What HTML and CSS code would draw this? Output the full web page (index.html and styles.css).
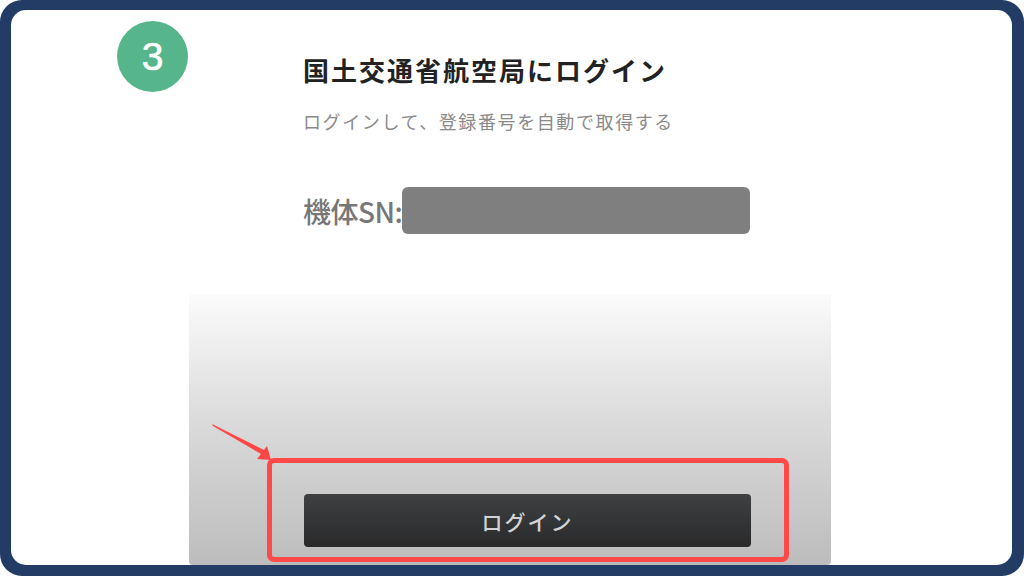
FILE: index.html
```html
<!DOCTYPE html>
<html lang="ja">
<head>
    <meta charset="utf-8">
    <title>国土交通省航空局にログイン</title>
    <link rel="stylesheet" href="styles.css">
</head>
<body>
    <div class="frame">
        <div class="card">
            <!-- Step number -->
            <div class="step-badge">3</div>

            <div class="screen">
                <div class="intro">
                    <h1 class="title">国土交通省航空局にログイン</h1>
                    <p class="subtitle">ログインして、登録番号を自動で取得する</p>
                    <div class="sn-row">
                        <span class="sn-label">機体SN:</span>
                        <span class="sn-value"></span>
                    </div>
                </div>

                <!-- Bottom area with highlighted login button -->
                <div class="panel">
                    <svg class="pointer" width="90" height="175" viewBox="0 0 90 175">
                        <polygon points="23,130 75,156 78,152 82,166 68,165 72,160 24,132" fill="#ff4646"/>
                    </svg>
                    <div class="highlight">
                        <button class="login-btn">ログイン</button>
                    </div>
                </div>
            </div>
        </div>
    </div>
</body>
</html>
```

FILE: styles.css
```css
/* General Styles */
body {
    margin: 0;
    background-color: #ffffff;
    font-family: "Noto Sans CJK JP", "Noto Sans", sans-serif;
}

.frame {
    width: 1024px;
    height: 576px;
    box-sizing: border-box;
    padding: 10px 12px 11px 11px;
    background-color: #223c66; /* navy frame */
    border-radius: 22px;
}

.card {
    position: relative;
    height: 100%;
    background-color: #ffffff;
    border-radius: 15px;
    overflow: hidden;
}

/* Step badge */
.step-badge {
    position: absolute;
    left: 106px;
    top: 11px;
    width: 71px;
    height: 71px;
    border-radius: 50%;
    background-color: #57b58b;
    color: #ffffff;
    font-family: "Liberation Sans", Arial, sans-serif;
    font-size: 39px;
    line-height: 71px;
    text-align: center;
    -webkit-text-stroke: 0.6px #ffffff;
}

/* Phone screen */
.screen {
    margin-left: 178px;
    width: 642px;
    height: 100%;
    display: flex;
    flex-direction: column;
}

.intro {
    padding: 44px 0 0 114px;
}

.title {
    margin: 0;
    font-size: 26px;
    line-height: 32px;
    letter-spacing: 2px;
    font-weight: bold;
    color: #222222;
}

.subtitle {
    margin: 23px 0 0;
    font-size: 18px;
    line-height: 24px;
    letter-spacing: 1.6px;
    color: #8a8a8a;
}

.sn-row {
    display: flex;
    align-items: center;
    margin-top: 54px;
    height: 47px;
}

.sn-label {
    font-size: 28px;
    font-weight: 500;
    color: #777777;
    letter-spacing: -0.5px;
}

.sn-value {
    width: 348px;
    height: 47px;
    border-radius: 6px;
    background-color: #7f7f7f;
}

.panel {
    position: relative;
    flex: 1;
    margin-top: 60px;
    padding: 164px 42px 3px 78px;
    background: linear-gradient(to bottom, #fbfbfb, #dcdcdc 45%, #bcbcbc);
    border-radius: 0 0 4px 4px;
}

.pointer {
    position: absolute;
    left: 0;
    top: 0;
}

.highlight {
    width: 522px;
    height: 104px;
    box-sizing: border-box;
    padding: 31px 33px 10px 32px;
    border: 5px solid #ff4848;
    border-radius: 7px;
}

.login-btn {
    display: block;
    width: 447px;
    height: 53px;
    border: none;
    border-radius: 4px;
    background: linear-gradient(to bottom, #3e4042, #2a2a2b);
    color: #d2d2d2;
    font-family: "Noto Sans CJK JP", "Noto Sans", sans-serif;
    font-size: 21px;
    font-weight: 500;
    letter-spacing: 2px;
}
```
